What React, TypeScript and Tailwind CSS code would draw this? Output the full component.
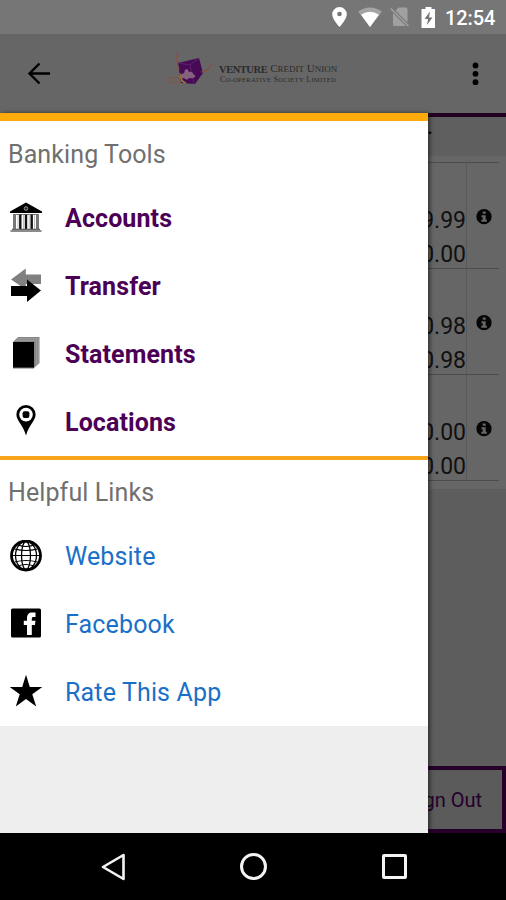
import type { ReactNode } from "react";

const BankIcon = () => (
  <svg className="h-8 w-8" viewBox="0 0 32 32">
    <path d="M16 .5 32 9.500v1.500H0V9.500z" fill="#000" />
    <circle cx="16" cy="6.500" r="1.800" fill="#222" stroke="#999" strokeWidth="1" />
    <path d="M3 12.500h26" stroke="#777" strokeWidth="1" />
    <path d="M4.500 12.500v14.500M27.500 12.500v14.500" stroke="#777" strokeWidth="3" />
    <path d="M10.300 12.500v14.500M16 12.500v14.500M21.700 12.500v14.500" stroke="#111" strokeWidth="2.400" />
    <path d="M8 13v14M13.400 13v14M19.200 13v14M24.600 13v14" stroke="#aaa" strokeWidth="0.800" />
    <path d="M2 27.300h28M.5 29h31" stroke="#666" strokeWidth="1.300" />
  </svg>
);

const TransferIcon = () => (
  <svg className="h-8 w-8 overflow-visible" viewBox="0 0 32 32">
    <path d="M1 9.500 15.800-1.500v6H31V14H15.800v5.500z" fill="#808080" />
    <path d="M31 20.500 17 9.500v6.500H1v10h16v6z" fill="#000" />
  </svg>
);

const StatementIcon = () => (
  <svg className="h-8 w-8 overflow-visible" viewBox="0 0 32 32">
    <path d="M3 4 8-1h21.500V25L24 30z" fill="#858585" />
    <path d="M5.500 2.300h21.200V27M7.500.7h20.800V26" fill="none" stroke="#aaa" strokeWidth="0.700" />
    <path d="M3 4h21v26H3z" fill="#000" />
    <path d="M3 30h21" stroke="#777" strokeWidth="1" />
  </svg>
);

const LocationIcon = () => (
  <svg className="h-8 w-8 overflow-visible" viewBox="0 0 32 32">
    <path d="M16-1a9.600 9.600 0 0 0-9.600 9.600C6.400 14.500 13 19 16 29.500c3-10.500 9.600-15 9.600-20.900A9.600 9.600 0 0 0 16-1z" fill="#000" />
    <circle cx="16" cy="8.600" r="6.800" fill="#fff" />
    <rect x="12.600" y="5.200" width="6.800" height="6.800" rx="2" fill="#000" />
  </svg>
);

const GlobeIcon = () => (
  <svg className="h-8 w-8" viewBox="0 0 32 32" fill="none" stroke="#000">
    <circle cx="16" cy="15.500" r="14.500" strokeWidth="2.800" />
    <ellipse cx="16" cy="15.500" rx="10.500" ry="14" strokeWidth="1.300" />
    <ellipse cx="16" cy="15.500" rx="4.500" ry="14" strokeWidth="1.300" />
    <path d="M2 15.500h28M4.500 9Q16 12 27.500 9M4.500 22Q16 19 27.500 22M8 5Q16 8 24 5M8 26Q16 23 24 26" strokeWidth="1.200" />
  </svg>
);

const FacebookIcon = () => (
  <svg className="h-8 w-8" viewBox="0 0 32 32">
    <rect x="1" y=".5" width="30" height="29" rx="1.500" fill="#000" />
    <path d="M17 27V17h-3.200v-4.300H17v-2.500C17 6.500 19 4.500 22 4.500h3.500v4.400h-2c-1.200 0-1.700.6-1.700 1.700v2.100h3.700l-.6 4.300h-3.100v10z" fill="#fff" />
  </svg>
);

const StarIcon = () => (
  <svg className="h-8 w-8 overflow-visible" viewBox="0 0 32 32">
    <path d="m16-1.200 3.800 12.100h12.500l-10 7.300 3.900 12.300L16 22.900 5.800 30.500l3.900-12.300-10-7.300h12.500z" fill="#000" />
  </svg>
);

const tools = [
  { label: "Accounts", icon: <BankIcon /> },
  { label: "Transfer", icon: <TransferIcon /> },
  { label: "Statements", icon: <StatementIcon /> },
  { label: "Locations", icon: <LocationIcon /> },
];

const links = [
  { label: "Website", icon: <GlobeIcon /> },
  { label: "Facebook", icon: <FacebookIcon /> },
  { label: "Rate This App", icon: <StarIcon /> },
];

const accounts = [
  ["9.99", "0.00"],
  ["0.98", "0.98"],
  ["0.00", "0.00"],
];

const MenuItem = ({ icon, label, bold }: { icon: ReactNode; label: string; bold?: boolean }) => (
  <div className="flex h-[68px] items-center pl-[10px]">
    {icon}
    <span
      className={
        bold
          ? "ml-[23px] pt-[2px] text-[25px] font-bold tracking-[0.1px] text-[#4b0055]"
          : "ml-[23px] pt-[2px] text-[25px] tracking-[0.15px] text-[#1a70c8]"
      }
    >
      {label}
    </span>
  </div>
);

const StatusBar = () => (
  <div className="flex h-[34px] items-center bg-[#767676] pl-[332px] text-white">
    <svg className="h-5 w-[15px]" viewBox="0 0 15 20">
      <path d="M7.500 0A7.300 7.300 0 0 0 .2 7.300C.2 12.500 7.500 20 7.500 20s7.300-7.500 7.300-12.700A7.300 7.300 0 0 0 7.500 0z" fill="#fff" />
      <circle cx="7.500" cy="7" r="2.300" fill="#767676" />
    </svg>
    <svg className="ml-[11px] h-5 w-6" viewBox="0 0 24 20">
      <path d="M12 20 .2 4.500Q12-3.500 23.800 4.500z" fill="#a4a4a4" />
      <path d="M12 20 3 7.700q9-6 18 0z" fill="#fff" />
    </svg>
    <svg className="ml-[8px] h-5 w-5" viewBox="0 0 20 20">
      <path d="M8.500.5H16q1.500 0 1.500 1.500v13.500L5.500 3.500zM3 6l13 13H4.500Q3 19 3 17.500z" fill="#a0a0a0" />
      <path d="m.8 1.500 17.700 17.500" stroke="#a0a0a0" strokeWidth="1.600" />
    </svg>
    <svg className="ml-[11px] h-[21px] w-[15px]" viewBox="0 0 15 21">
      <path d="M4.500 0h6v2H14v19H.5V2h4z" fill="#fff" />
      <path d="M9 4.500 3.500 12H7l-1 6 5.500-7.500H8z" fill="#767676" />
    </svg>
    <span className="ml-[9px] pt-[2px] text-[20px] font-medium leading-none tracking-[-0.1px]">12:54</span>
  </div>
);

const Header = () => (
  <div className="flex h-[79px] items-center bg-[#666666]">
    <svg className="ml-[27px] h-6 w-6" viewBox="0 0 24 24" fill="none" stroke="#000" strokeWidth="2.400">
      <path d="M23 11.500H3M12.500 1.500 2.500 11.500l10 10" />
    </svg>
    <div className="ml-[116px] flex items-center">
      <svg className="h-[46px] w-[47px]" viewBox="0 0 47 46">
        <path d="m11 12 21-5 4 15-8 11-14-1z" fill="#470a55" />
        <path d="m11 12 12 2 9-7M23 14l4 19" stroke="#5f2070" strokeWidth="1" fill="none" />
        <path d="M18 19q2-2 3 0l1 2q4-1 4 2 3 1 2 3-3 2-6 1-2 3-5 0-3 1-3-2 1-3 3-3z" fill="#85617f" />
        <path d="M12 19C10 13 9 5 11 1M13 22c0 6 3 9 6 11M34 21q8 0 10-8M16 27q-8-1-14 0-3 4 3 5 9 0 11-3" fill="none" stroke="#865242" strokeWidth="1.200" />
        <path d="M14 23q-1 8 5 9" fill="none" stroke="#928034" strokeWidth="1.400" />
      </svg>
      <div className="ml-[5px] whitespace-nowrap font-['Liberation_Serif',serif] text-[#2b2b2b]">
        <div className="flex h-[11px] items-center gap-[3px] text-[11px] leading-[11px]">
          <span className="text-[10.500px] font-bold tracking-[-0.450px]">VENTURE</span>
          <span>C<span className="text-[9px]">REDIT</span> U<span className="text-[9px]">NION</span></span>
        </div>
        <div className="h-[9px] pl-px text-[8px] leading-[9px] tracking-[0.300px]">
          C<span className="text-[6.500px]">O-OPERATIVE</span> S<span className="text-[6.500px]">OCIETY</span> L<span className="text-[6.500px]">IMITED</span>
        </div>
      </div>
    </div>
    <svg className="ml-auto mr-[27px] h-6 w-[7px]" viewBox="0 0 7 24">
      <circle cx="3.500" cy="3.500" r="2.900" />
      <circle cx="3.500" cy="11.800" r="2.900" />
      <circle cx="3.500" cy="20.200" r="2.900" />
    </svg>
  </div>
);

const AccountsPage = () => (
  <div className="flex h-[720px] flex-col border-t-4 border-[#210023] bg-[#5d5d5d]">
    <div className="h-[39px] bg-[#5f5f5f] pl-[427px] text-[23px] leading-[20px] text-black">.</div>
    <div className="h-[333px] bg-[#666666] pr-[7px] pt-[6px]">
      {accounts.map(([balance, available], i) => (
        <div key={i} className="flex h-[106px] border-t border-[#4c4c4c]">
          <div className="flex-1 border-r border-[#5a5a5a] pt-[41px] text-right text-[23px] leading-[34px] text-[#101010]">
            <div>{balance}</div>
            <div>{available}</div>
          </div>
          <div className="w-8 pl-[9px] pt-[46px]">
            <svg className="h-4 w-4" viewBox="0 0 16 16">
              <circle cx="8" cy="7.700" r="7.600" fill="#050505" />
              <path d="M6.700 2.500h3v2.200h-3zM5.500 6.300h4.200v4.500h1.200v1.900H5.300v-1.900h1.400V8.200H5.500z" fill="#666" />
            </svg>
          </div>
        </div>
      ))}
      <div className="border-t border-[#4c4c4c]" />
    </div>
    <div className="mt-auto flex h-[67px] items-center justify-end border-4 border-l-0 border-[#260029] bg-[#5b5b5b] pr-[20px] text-[20px] text-[#25002b]">
      Sign Out
    </div>
  </div>
);

const Drawer = () => (
  <div className="absolute left-0 top-[113px] h-[720px] w-[428px] border-t-8 border-[#fdab0b] bg-[#eeeeee] shadow-[2px_0_4px_rgba(0,0,0,0.5)]">
    <div className="bg-white">
      <div className="flex h-[63px] items-center pl-2 pt-[5px] text-[25px] tracking-[0.1px] text-[#707070]">Banking Tools</div>
      {tools.map((item) => (
        <MenuItem key={item.label} {...item} bold />
      ))}
      <div className="h-1 bg-[#f8a51b]" />
      <div className="flex h-[62px] items-center pl-2 pt-[4px] text-[25px] tracking-[0.1px] text-[#707070]">Helpful Links</div>
      {links.map((item) => (
        <MenuItem key={item.label} {...item} />
      ))}
    </div>
  </div>
);

const NavBar = () => (
  <div className="flex h-[67px] items-center bg-black pl-[101px]">
    <svg className="h-7 w-6" viewBox="0 0 24 28" fill="none" stroke="#f4f4f4" strokeWidth="2.600" strokeLinejoin="round">
      <path d="M22.500 2v24L2 14z" />
    </svg>
    <div className="ml-[115px] h-[27px] w-[27px] rounded-full border-[3px] border-[#f4f4f4]" />
    <div className="ml-[115px] h-[25px] w-[25px] rounded-[2px] border-[3px] border-[#f4f4f4]" />
  </div>
);

export default function App() {
  return (
    <div className="relative h-[900px] w-[506px] overflow-hidden bg-black font-['Roboto',sans-serif]">
      <StatusBar />
      <Header />
      <AccountsPage />
      <Drawer />
      <NavBar />
    </div>
  );
}
